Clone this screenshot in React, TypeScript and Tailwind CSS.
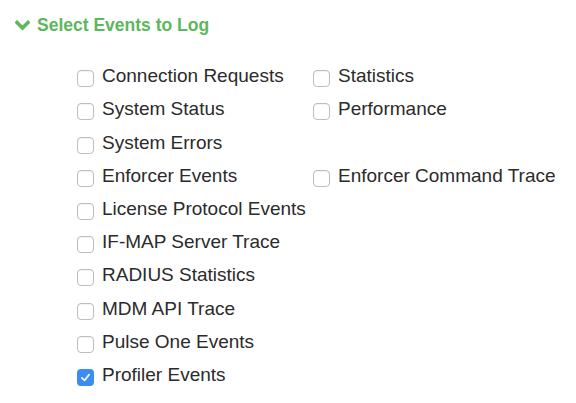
import React from 'react'

const left = [
  'Connection Requests',
  'System Status',
  'System Errors',
  'Enforcer Events',
  'License Protocol Events',
  'IF-MAP Server Trace',
  'RADIUS Statistics',
  'MDM API Trace',
  'Pulse One Events',
  'Profiler Events',
]

const right: Record<number, string> = {
  0: 'Statistics',
  1: 'Performance',
  3: 'Enforcer Command Trace',
}

const Check = ({ label, checked }: { label: string; checked?: boolean }) => (
  <label className="flex items-center gap-[8px]">
    {checked ? (
      <span className="flex w-[17px] h-[17px] items-center justify-center rounded-[4px] bg-[#3b8df1] mt-[5px]">
        <svg width="11" height="11" viewBox="0 0 12 12" fill="none">
          <path d="M2 6.5 L5 9.2 L10 2.8" stroke="white" strokeWidth="1.8" strokeLinecap="round" strokeLinejoin="round" />
        </svg>
      </span>
    ) : (
      <span className="w-[17px] h-[17px] rounded-[4px] border border-[#bdbdbd] bg-white mt-[5px] shadow-[inset_0_1px_1px_rgba(0,0,0,0.05)]" />
    )}
    <span className="text-[19px] leading-[24px] text-[#2b2b2b]">{label}</span>
  </label>
)

export default function App() {
  return (
    <div className="w-[576px] h-[403px] bg-white font-[family-name:'Liberation_Sans',Arial,sans-serif]">
      <div className="flex items-center gap-[7px] pl-[15px] pt-[12px]">
        <svg width="15" height="11" viewBox="0 0 15 11" className="mt-[1px]">
          <path d="M2 2.5 L7.5 8 L13 2.5" stroke="#5cb85c" strokeWidth="3.6" fill="none" strokeLinecap="square" />
        </svg>
        <span className="text-[17.5px] font-bold text-[#5cb85c]">Select Events to Log</span>
      </div>
      <div className="grid grid-cols-[236px_1fr] pl-[77px] pt-[26px]">
        {left.map((l, i) => (
          <React.Fragment key={l}>
            <div className="h-[33.2px]">
              <Check label={l} checked={l === 'Profiler Events'} />
            </div>
            <div className="h-[33.2px]">{right[i] && <Check label={right[i]} />}</div>
          </React.Fragment>
        ))}
      </div>
    </div>
  )
}
